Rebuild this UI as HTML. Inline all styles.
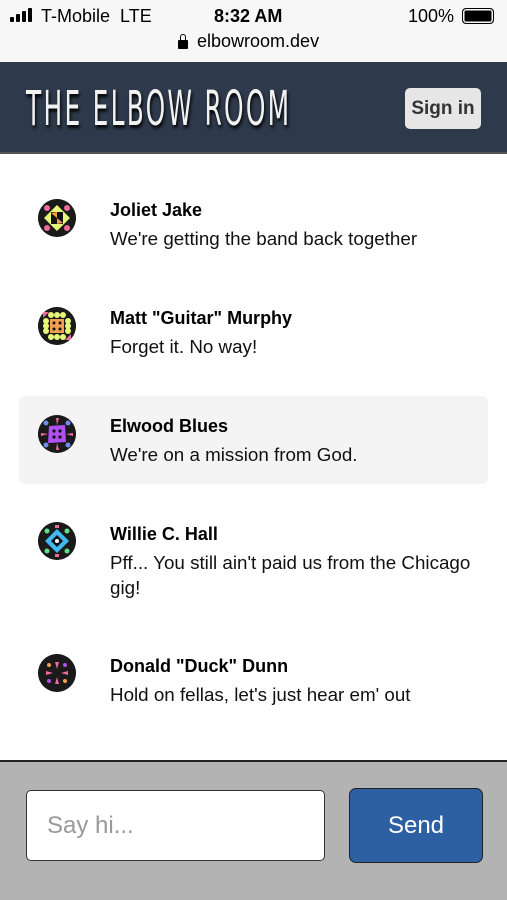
<!DOCTYPE html>
<html><head><meta charset="utf-8"><style>
*{margin:0;padding:0;box-sizing:border-box}
body{width:507px;height:900px;overflow:hidden;background:#fff;font-family:"Liberation Sans","DejaVu Sans",sans-serif;position:relative}
.status{position:absolute;top:0;left:0;width:507px;height:62px;background:#f7f7f7;color:#000}
.status span{position:absolute;font-size:18px}
.bar{position:absolute;background:#000;width:4px;border-radius:1px}
.hdr{position:absolute;top:62px;left:0;width:507px;height:92px;background:#2e3a4b;border-bottom:2px solid #555}
.title{position:absolute;left:26px;top:19px;font-size:48px;color:#f2f2f2;letter-spacing:4px;transform:scaleX(0.575);transform-origin:left top;text-shadow:2px 3px 4px #000;font-family:"DejaVu Sans Condensed","Liberation Sans",sans-serif;font-weight:300;white-space:nowrap}
.signin{position:absolute;left:405px;top:26px;width:76px;height:41px;background:#e6e6e6;border-radius:5px;font-weight:bold;font-size:19px;color:#333;text-align:center;line-height:41px}
.msg{position:absolute;left:19px;width:469px}
.msg.hl{background:#f4f4f4;border-radius:6px}
.av{position:absolute;left:19px;width:38px;height:38px;border-radius:50%;background:#1a1a1a}
.nm{position:absolute;left:91px;font-weight:bold;font-size:18px;color:#000}
.tx{position:absolute;left:91px;font-size:18.8px;color:#111;width:380px;line-height:25px}
.foot{position:absolute;top:760px;left:0;width:507px;height:140px;background:#b3b3b3;border-top:2px solid #222}
.inp{position:absolute;left:26px;top:28px;width:299px;height:71px;background:#fff;border:1px solid #333;border-radius:5px;font-size:24px;color:#999;padding-left:20px;line-height:69px}
.send{position:absolute;left:349px;top:26px;width:134px;height:75px;background:#2d5fa3;border:1.5px solid #222;border-radius:7px;color:#fff;font-size:24px;text-align:center;line-height:73px}
</style></head><body>
<div class="status">
<div class="bar" style="left:10px;top:17px;height:5px"></div>
<div class="bar" style="left:16px;top:14px;height:8px"></div>
<div class="bar" style="left:22px;top:11px;height:11px"></div>
<div class="bar" style="left:28px;top:8px;height:14px"></div>
<span style="left:41px;top:6px">T-Mobile&nbsp;&nbsp;LTE</span>
<span style="left:214px;top:6px;font-weight:bold">8:32 AM</span>
<span style="left:408px;top:6px">100%</span>
<span style="left:462px;top:8px;width:32px;height:16px;border:1.5px solid #000;border-radius:4px;background:#000;box-shadow:inset 0 0 0 1.5px #f7f7f7"></span>
<span style="left:178px;top:40px;width:10px;height:9px;background:#000;border-radius:1px"></span>
<span style="left:180px;top:34px;width:6px;height:8px;border:1.5px solid #000;border-bottom:none;border-radius:3px 3px 0 0"></span>
<span style="left:197px;top:31px">elbowroom.dev</span>
</div>
<div class="hdr"><div class="title">THE ELBOW ROOM</div><div class="signin">Sign in</div></div>

<div class="msg" style="top:180px;height:80px">
<svg class="av" style="top:19px" viewBox="0 0 38 38"><circle cx="19" cy="19" r="19" fill="#1a1a1a"/><polygon points="19,6 32,19 19,32 6,19" fill="#e6f77a"/><rect x="13" y="13" width="12" height="12" fill="#111"/><polygon points="19,19 13,14 19,13" fill="#f0a040"/><polygon points="19,19 25,24 19,25" fill="#f0a040"/><circle cx="9" cy="9" r="3" fill="#f06a9a"/><circle cx="29" cy="9" r="3" fill="#f06a9a"/><circle cx="9" cy="29" r="3" fill="#f06a9a"/><circle cx="29" cy="29" r="3" fill="#f06a9a"/></svg>
<div class="nm" style="top:20px">Joliet Jake</div><div class="tx" style="top:46px">We're getting the band back together</div></div>

<div class="msg" style="top:288px;height:80px">
<svg class="av" style="top:19px" viewBox="0 0 38 38"><circle cx="19" cy="19" r="19" fill="#1a1a1a"/><g fill="#e6f77a"><circle cx="13" cy="8" r="3"/><circle cx="19" cy="8" r="3"/><circle cx="25" cy="8" r="3"/><circle cx="13" cy="30" r="3"/><circle cx="19" cy="30" r="3"/><circle cx="25" cy="30" r="3"/><circle cx="8" cy="14" r="3"/><circle cx="8" cy="19" r="3"/><circle cx="8" cy="24" r="3"/><circle cx="30" cy="14" r="3"/><circle cx="30" cy="19" r="3"/><circle cx="30" cy="24" r="3"/></g><rect x="12" y="12" width="14" height="14" fill="#f0a050"/><g fill="#111"><circle cx="16" cy="16" r="1.5"/><circle cx="22" cy="16" r="1.5"/><circle cx="16" cy="22" r="1.5"/><circle cx="22" cy="22" r="1.5"/></g><g fill="#f06a9a"><polygon points="5,5 11,5 5,11"/><polygon points="33,33 27,33 33,27"/></g></svg>
<div class="nm" style="top:20px">Matt "Guitar" Murphy</div><div class="tx" style="top:46px">Forget it. No way!</div></div>

<div class="msg hl" style="top:396px;height:88px">
<svg class="av" style="top:19px" viewBox="0 0 38 38"><circle cx="19" cy="19" r="19" fill="#1a1a1a"/><polygon points="11,11 27,10 28,27 10,28" fill="#b050f0"/><g fill="#111"><circle cx="16" cy="16" r="1.6"/><circle cx="22" cy="16" r="1.6"/><circle cx="16" cy="22" r="1.6"/><circle cx="22" cy="22" r="1.6"/></g><g fill="#6e8cf0"><circle cx="8" cy="8" r="2.5"/><circle cx="30" cy="8" r="2.5"/><circle cx="8" cy="30" r="2.5"/><circle cx="30" cy="30" r="2.5"/></g><g fill="#f06a9a"><polygon points="18,3 21,3 19,10"/><polygon points="18,35 21,35 19,28"/><polygon points="3,18 3,21 10,19"/><polygon points="35,18 35,21 28,19"/></g></svg>
<div class="nm" style="top:20px">Elwood Blues</div><div class="tx" style="top:46px">We're on a mission from God.</div></div>

<div class="msg" style="top:504px;height:100px">
<svg class="av" style="top:18px" viewBox="0 0 38 38"><circle cx="19" cy="19" r="19" fill="#1a1a1a"/><polygon points="19,7 31,19 19,31 7,19" fill="#40b8f0"/><polygon points="19,13 25,19 19,25 13,19" fill="#111"/><circle cx="19" cy="19" r="2" fill="#fff"/><g fill="#5ee08a"><circle cx="9" cy="9" r="2.5"/><circle cx="29" cy="9" r="2.5"/><circle cx="9" cy="29" r="2.5"/><circle cx="29" cy="29" r="2.5"/></g><g fill="#f06a9a"><rect x="17" y="3" width="4" height="3"/><rect x="17" y="32" width="4" height="3"/></g></svg>
<div class="nm" style="top:20px">Willie C. Hall</div><div class="tx" style="top:46px">Pff... You still ain't paid us from the Chicago gig!</div></div>

<div class="msg" style="top:636px;height:80px">
<svg class="av" style="top:18px" viewBox="0 0 38 38"><circle cx="19" cy="19" r="19" fill="#1a1a1a"/><g fill="#f06a9a"><polygon points="17,8 21,8 19,15"/><polygon points="17,30 21,30 19,23"/><polygon points="8,17 8,21 15,19"/><polygon points="30,17 30,21 23,19"/></g><g fill="#f0a050"><circle cx="11" cy="11" r="2"/><circle cx="27" cy="27" r="2"/></g><g fill="#b050f0"><circle cx="27" cy="11" r="2"/><circle cx="11" cy="27" r="2"/></g></svg>
<div class="nm" style="top:20px">Donald "Duck" Dunn</div><div class="tx" style="top:46px">Hold on fellas, let's just hear em' out</div></div>

<div class="foot"><div class="inp">Say hi...</div><div class="send">Send</div></div>
</body></html>
